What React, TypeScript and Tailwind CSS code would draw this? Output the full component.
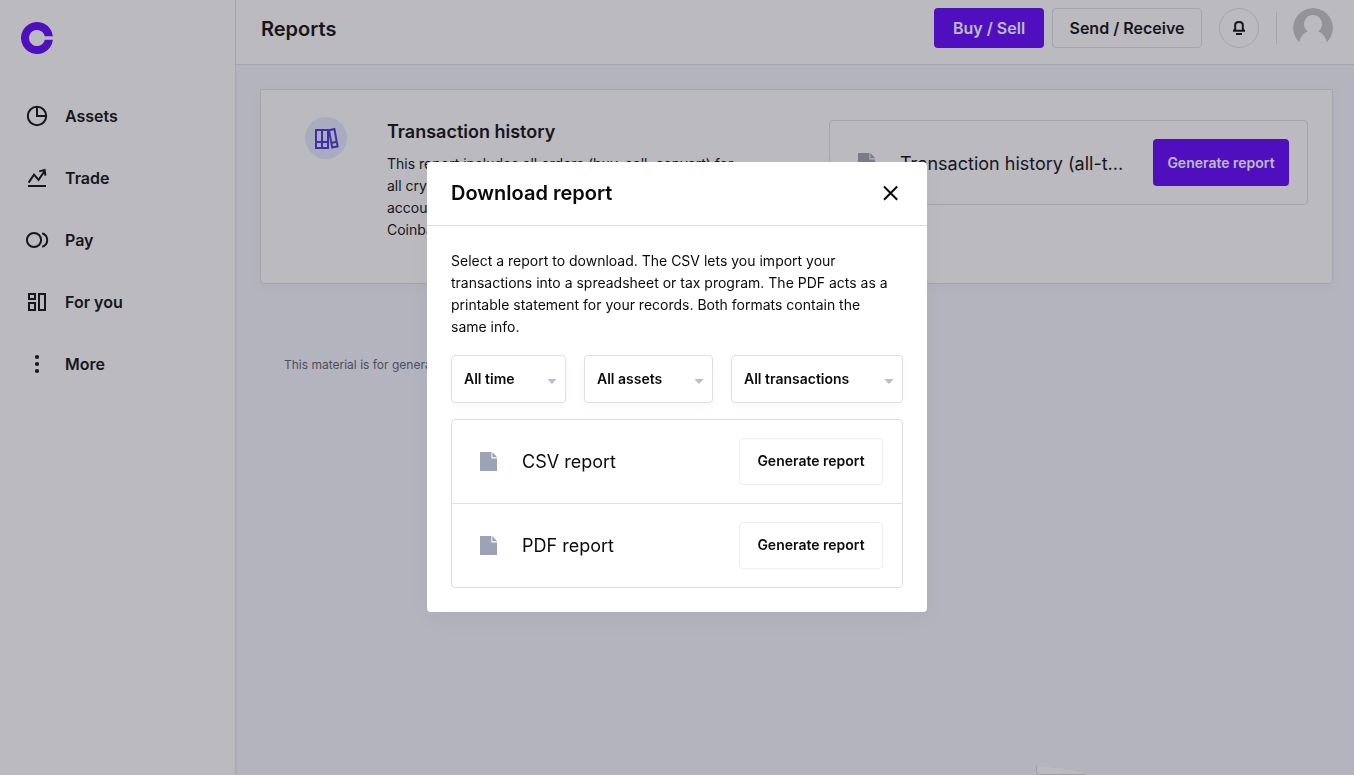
import React from "react";

const iconProps = {
  width: 24,
  height: 24,
  viewBox: "0 0 24 24",
  fill: "none",
  stroke: "currentColor",
  strokeWidth: 2,
  "aria-hidden": true,
};

function AssetsIcon() {
  return (
    <svg {...iconProps}>
      <circle cx="12" cy="12" r="9.2" />
      <path d="M12 3v9h9" />
    </svg>
  );
}

function TradeIcon() {
  return (
    <svg {...iconProps}>
      <path d="M3.6 16.6 9 8.6l4.6 5.2 5.8-8.6" />
      <path d="M14.2 5.4 19.6 4l.8 5.6" />
      <path d="M3 20h18" />
    </svg>
  );
}

function PayIcon() {
  return (
    <svg {...iconProps}>
      <circle cx="9" cy="12" r="7.1" />
      <path d="M17.2 5.2c3.4 1.2 5 4 5 6.8s-1.6 5.6-5 6.8" />
    </svg>
  );
}

function ForYouIcon() {
  return (
    <svg {...iconProps}>
      <path d="M4 4h6v5H4zM4 13h6v7H4zM14 4h6v16h-6z" />
    </svg>
  );
}

function MoreIcon() {
  return (
    <svg {...iconProps} fill="currentColor" stroke="none">
      <circle cx="12" cy="5" r="2.1" />
      <circle cx="12" cy="12" r="2.1" />
      <circle cx="12" cy="19" r="2.1" />
    </svg>
  );
}

function FileIcon() {
  return (
    <svg width="18" height="19" viewBox="0 0 18 19" fill="#9ca3b4" className="shrink-0" aria-hidden="true">
      <path d="M0 0h11.4v6.6H17V19H0z" />
      <path d="M12.4 0 17.2 5.2h-4.8z" />
    </svg>
  );
}

const navItems = [
  { label: "Assets", Icon: AssetsIcon },
  { label: "Trade", Icon: TradeIcon },
  { label: "Pay", Icon: PayIcon },
  { label: "For you", Icon: ForYouIcon },
  { label: "More", Icon: MoreIcon },
];

function Sidebar() {
  return (
    <aside className="w-[236px] shrink-0 border-r border-[#dde1e6] bg-white pt-[22px]">
      <a href="#home" aria-label="Home" className="ml-[21px] block size-8">
        <svg width="32" height="32" viewBox="0 0 32 32" aria-hidden="true">
          <path fill="#5e00ff" d="M31.9 14.3h-8.1a8 8 0 1 0 0 3.4h8.1A16 16 0 1 1 31.9 14.3z" />
        </svg>
      </a>
      <nav className="mt-[31px] flex flex-col">
        {navItems.map(({ label, Icon }) => (
          <a key={label} href={`#${label}`} className="flex h-[62px] items-center gap-4 pl-[25px] font-semibold">
            <Icon />
            {label}
          </a>
        ))}
      </nav>
    </aside>
  );
}

function Header() {
  return (
    <header className="flex h-[65px] items-start border-b border-[#dde1e6] bg-white pt-2 pr-[21px] pl-[25px]">
      <h1 className="text-xl leading-[42px] font-semibold">Reports</h1>
      <div className="ml-auto flex items-center">
        <button type="button" className="h-10 w-[110px] rounded bg-[#5e00ff] font-semibold text-white">
          Buy / Sell
        </button>
        <button type="button" className="ml-2 h-10 w-[150px] rounded border border-[#dde1e6] font-semibold">
          Send / Receive
        </button>
        <button
          type="button"
          aria-label="Notifications"
          className="ml-[17px] flex size-10 items-center justify-center rounded-full border border-[#dde1e6]"
        >
          <svg width="14" height="16" viewBox="0 0 14 16" fill="none" stroke="currentColor" strokeWidth="2" aria-hidden="true">
            <path d="M1 10.8h12M2.2 10.8 3.2 9V5.2C3.2 3 4.8 2 7 2s3.8 1 3.8 3.2V9l1 1.8" />
            <path d="M4 14h6" />
          </svg>
        </button>
        <span className="ml-[17px] h-8 w-px bg-[#dde1e6]" />
        <button type="button" aria-label="Account" className="ml-4 size-10 overflow-hidden rounded-full">
          <svg width="40" height="40" viewBox="0 0 40 40" aria-hidden="true">
            <path
              fill="#c5c5c5"
              d="M6.2 34.4A20 20 0 1 1 33.8 34.4C32.4 28.5 29.5 25 25 23.6a9 9 0 1 0-10 0C10.5 25 7.6 28.5 6.2 34.4z"
            />
          </svg>
        </button>
      </div>
    </header>
  );
}

function HistoryCard() {
  return (
    <section className="flex min-h-[195px] justify-between rounded-b border border-[#dde1e6] bg-white pr-6 pl-11 shadow-[0_4px_12px_rgba(90,95,140,0.05)]">
      <div className="flex pt-[27px]">
        <span className="flex size-[42px] shrink-0 items-center justify-center rounded-full bg-[#e4ebff]">
          <svg width="26" height="24" viewBox="0 0 26 24" fill="none" stroke="#4a30d8" strokeWidth="2" aria-hidden="true">
            <path d="M3 4h12v18H3zM9 4v18M3 16h12" />
            <path d="m16 4.2 5.4-1.2 3.2 17.4-5.4 1.2zM18.2 17l5.4-1.2" />
          </svg>
        </span>
        <div className="ml-10 w-[352px]">
          <h2 className="text-lg leading-[30px] font-semibold">Transaction history</h2>
          <p className="mt-[6px] text-sm leading-[22px]">
            This report includes all orders (buy, sell, convert) for all crypto assets held in your Coinbase
            <br />
            account, along with sends and receives on
            <br />
            Coinbase.
          </p>
        </div>
      </div>
      <div className="mt-[30px] flex h-[85px] w-[479px] items-center rounded border border-[#dde1e6] pr-[18px] pl-7">
        <FileIcon />
        <span className="ml-6 pt-0.5 text-lg">Transaction history (all-t...</span>
        <button type="button" className="ml-auto h-[47px] w-[136px] rounded bg-[#5e00ff] text-sm font-semibold text-white">
          Generate report
        </button>
      </div>
    </section>
  );
}

function Filter({ label, name, className }: { label: string; name: string; className: string }) {
  return (
    <div className={`relative ${className}`}>
      <select
        aria-label={name}
        className="h-12 w-full appearance-none rounded border border-[#dddfe3] bg-white pl-3 text-sm font-semibold shadow-[0_4px_12px_rgba(0,0,0,0.03)]"
      >
        <option>{label}</option>
      </select>
      <svg
        className="pointer-events-none absolute top-6 right-[9px]"
        width="10"
        height="5"
        viewBox="0 0 10 5"
        fill="#b8bccb"
        aria-hidden="true"
      >
        <path d="M.5 0h9L5.600 4.500h-1.200z" />
      </svg>
    </div>
  );
}

function ReportRow({ title }: { title: string }) {
  return (
    <li className="flex h-[84px] items-center border-b border-[#dddfe3] pr-[19px] pl-7 last:h-[83px] last:border-b-0">
      <FileIcon />
      <span className="ml-6 pt-0.5 text-lg">{title}</span>
      <button type="button" className="ml-auto h-[47px] w-36 rounded border border-[#eeeef1] text-sm font-semibold">
        Generate report
      </button>
    </li>
  );
}

function DownloadDialog() {
  return (
    <div
      role="dialog"
      aria-modal="true"
      aria-labelledby="dialog-title"
      className="w-[500px] rounded bg-white shadow-[0_8px_24px_rgba(0,0,0,0.03)]"
    >
      <div className="flex h-16 items-center justify-between border-b border-[#dddfe3] px-6">
        <h2 id="dialog-title" className="text-xl font-semibold">
          Download report
        </h2>
        <button type="button" aria-label="Close" className="flex size-6 items-center justify-center">
          <svg width="16" height="16" viewBox="0 0 16 16" fill="none" stroke="currentColor" strokeWidth="2" aria-hidden="true">
            <path d="m1 1.5 13.2 13.2M14.2 1.5 1 14.7" />
          </svg>
        </button>
      </div>
      <div className="p-6">
        <p className="pr-3 text-sm leading-[22px]">
          Select a report to download. The CSV lets you import your transactions into a spreadsheet or tax program. The
          PDF acts as a printable statement for your records. Both formats contain the same info.
        </p>
        <div className="mt-[17px] flex gap-[18px]">
          <Filter name="Time range" label="All time" className="w-[115px]" />
          <Filter name="Assets" label="All assets" className="w-[129px]" />
          <Filter name="Transaction types" label="All transactions" className="flex-1" />
        </div>
        <ul className="mt-4 rounded border border-[#dddfe3]">
          <ReportRow title="CSV report" />
          <ReportRow title="PDF report" />
        </ul>
      </div>
    </div>
  );
}

export default function App() {
  return (
    <div className="relative flex min-h-screen bg-[#f5f6fe] font-['Inter',sans-serif] text-[#0a0b0d]">
      <Sidebar />
      <div className="min-w-0 flex-1">
        <Header />
        <main className="pt-6 pr-[21px] pl-6">
          <HistoryCard />
          <p className="mt-[72px] px-6 text-xs leading-[18px] text-[#5b616e]">
            This material is for general informational purposes only.
          </p>
        </main>
      </div>
      <svg className="absolute bottom-0 left-[1036px]" width="50" height="9" viewBox="0 0 50 9" aria-hidden="true">
        <path fill="#ffffff" d="M1 1h13v1h13v2h11v2h10v2H1z" />
        <path fill="none" stroke="#d4d6dc" d="M.5 0v5.5q0 3 3 3H49" />
      </svg>
      <div className="fixed inset-0 flex items-center justify-center bg-[rgba(48,45,60,0.33)] pb-0.5">
        <DownloadDialog />
      </div>
    </div>
  );
}
